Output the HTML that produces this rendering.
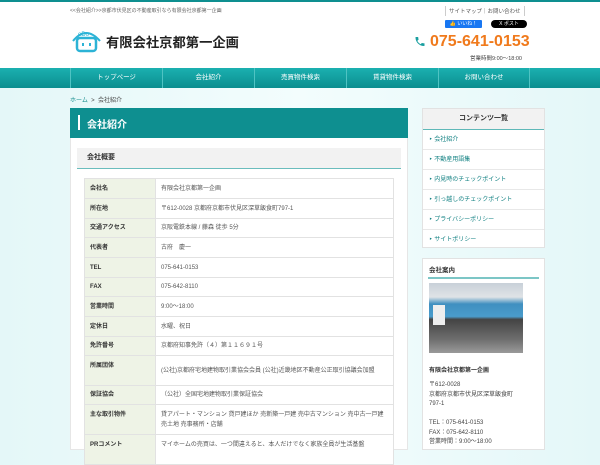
<!DOCTYPE html>
<html><head><meta charset="utf-8"><style>
*{margin:0;padding:0;box-sizing:border-box}
body{width:600px;height:450px;overflow:hidden;font-family:"Liberation Sans","Noto Sans CJK JP",sans-serif;background:linear-gradient(90deg,#e4f7f8,#f3fdfd 50%,#e4f7f8);position:relative;color:#333}
.abs{position:absolute}
#hdr{left:0;top:0;width:600px;height:68px;background:#fff;border-top:2px solid #0e8f90}
#nav{left:0;top:68px;width:600px;height:20px;background:linear-gradient(#1bb0b0,#0b8e8f)}
#nav div{position:absolute;top:0;height:20px;line-height:20px;color:#fff;font-size:6.5px;text-align:center;width:92px;border-left:1px solid #4fc3c3}
.tbl{left:84px;top:178px;width:310px;border-collapse:collapse;font-size:6px}
.tbl td{border:1px solid #e2e2e2;padding:0 5px;vertical-align:middle;line-height:10px}
.tbl td:first-child{background:#eef3e6;font-weight:bold;width:71px;color:#333}
.tbl td:last-child{background:#fff;color:#555}
.side a{display:block;height:20px;line-height:20px;border-bottom:1px solid #e8e8e8;font-size:6px;color:#0e7f80;padding-left:6px}
</style></head><body>
<div id="hdr" class="abs"></div>
<div class="abs" style="left:70px;top:7px;font-size:5px;color:#666">&lt;&lt;会社紹介&gt;&gt;京都市伏見区の不動産取引なら有限会社京都第一企画</div>
<div class="abs" style="left:445px;top:6px;font-size:5.5px;color:#555;border-left:1px solid #ccc;border-right:1px solid #ccc;padding:1px 3px">サイトマップ｜お問い合わせ</div>
<div class="abs" style="left:445px;top:20px;width:37px;height:8px;background:#1877f2;color:#fff;font-size:5px;line-height:8px;text-align:center;border-radius:1px">👍 いいね！</div>
<div class="abs" style="left:491px;top:20px;width:36px;height:8px;background:#000;color:#fff;font-size:5px;line-height:8px;text-align:center;border-radius:4px">X ポスト</div>
<svg class="abs" style="left:70px;top:27px" width="33" height="26" viewBox="0 0 33 26"><path d="M3 14 Q16 -2 30 14" fill="none" stroke="#2cb3d6" stroke-width="2"/><rect x="7" y="11" width="19" height="13" rx="3" fill="none" stroke="#2cb3d6" stroke-width="2.5"/><rect x="12" y="16" width="2" height="3" fill="#2cb3d6"/><rect x="19" y="16" width="2" height="3" fill="#2cb3d6"/><text x="8" y="9" font-size="6" fill="#2cb3d6" font-family="Liberation Sans">eDo</text></svg>
<div class="abs" style="left:106px;top:32px;font-size:13.3px;font-weight:bold;color:#222">有限会社京都第一企画</div>
<svg class="abs" style="left:414px;top:35px" width="12" height="13" viewBox="0 0 24 24"><path d="M6.6 10.8c1.4 2.8 3.8 5.1 6.6 6.6l2.2-2.2c.3-.3.7-.4 1-.2 1.1.4 2.3.6 3.6.6.6 0 1 .4 1 1V20c0 .6-.4 1-1 1C10.6 21 3 13.4 3 4c0-.6.4-1 1-1h3.5c.6 0 1 .4 1 1 0 1.3.2 2.5.6 3.6.1.3 0 .7-.2 1z" fill="#1a9fa0"/></svg>
<div class="abs" style="left:430px;top:33px;font-size:16px;font-weight:bold;color:#f07a1c">075-641-0153</div>
<div class="abs" style="left:470px;top:54px;font-size:5.5px;color:#444">営業時間9:00～18:00</div>
<div id="nav" class="abs">
<div style="left:70px">トップページ</div><div style="left:162px">会社紹介</div><div style="left:254px">売買物件検索</div><div style="left:346px">賃貸物件検索</div><div style="left:438px;width:92px;border-right:1px solid #4fc3c3">お問い合わせ</div></div>
<div class="abs" style="left:70px;top:95px;font-size:6px;color:#444"><span style="color:#1a8f90">ホーム</span> &nbsp;&gt;&nbsp; 会社紹介</div>
<div class="abs" style="left:70px;top:108px;width:338px;height:342px;background:#fff;border:1px solid #e6e6e6"></div>
<div class="abs" style="left:70px;top:108px;width:338px;height:30px;background:#0e8f90"></div>
<div class="abs" style="left:78px;top:115px;width:2px;height:15px;background:#fff"></div>
<div class="abs" style="left:87px;top:116px;font-size:10px;color:#fff;font-weight:bold">会社紹介</div>
<div class="abs" style="left:77px;top:148px;width:324px;height:21px;background:#f2f2f2;border-bottom:1.5px solid #6bbdbd;font-size:7px;font-weight:bold;line-height:20px;padding-left:10px">会社概要</div>
<table class="tbl abs">
<tr style="height:20px"><td>会社名</td><td>有限会社京都第一企画</td></tr>
<tr style="height:20px"><td>所在地</td><td>〒612-0028 京都府京都市伏見区深草飯食町797-1</td></tr>
<tr style="height:19px"><td>交通アクセス</td><td>京阪電鉄本線 / 藤森 徒歩 5分</td></tr>
<tr style="height:20px"><td>代表者</td><td>古府　慶一</td></tr>
<tr style="height:20px"><td>TEL</td><td>075-641-0153</td></tr>
<tr style="height:19px"><td>FAX</td><td>075-642-8110</td></tr>
<tr style="height:20px"><td>営業時間</td><td>9:00～18:00</td></tr>
<tr style="height:20px"><td>定休日</td><td>水曜、祝日</td></tr>
<tr style="height:19px"><td>免許番号</td><td>京都府知事免許（４）第１１６９１号</td></tr>
<tr style="height:30px"><td style="vertical-align:top;padding-top:5px">所属団体</td><td>(公社)京都府宅地建物取引業協会会員 (公社)近畿地区不動産公正取引協議会加盟</td></tr>
<tr style="height:19px"><td>保証協会</td><td>（公社）全国宅地建物取引業保証協会</td></tr>
<tr style="height:30px"><td style="vertical-align:top;padding-top:5px">主な取引物件</td><td>貸アパート・マンション 貸戸建ほか 売新築一戸建 売中古マンション 売中古一戸建 売土地 売事務所・店舗</td></tr>
<tr style="height:30px"><td style="vertical-align:top;padding-top:5px">PRコメント</td><td style="vertical-align:top;padding-top:5px">マイホームの売買は、一つ間違えると、本人だけでなく家族全員が生活基盤</td></tr>
</table>
<div class="abs side" style="left:422px;top:108px;width:123px;height:140px;background:#fff;border:1px solid #e2e2e2">
<div style="height:21px;background:#f2f2f2;border-bottom:1.5px solid #5fb8b8;text-align:center;font-size:7px;font-weight:bold;line-height:20px">コンテンツ一覧</div>
<a>‣ 会社紹介</a><a>‣ 不動産用語集</a><a>‣ 内見時のチェックポイント</a><a>‣ 引っ越しのチェックポイント</a><a>‣ プライバシーポリシー</a><a style="border:0">‣ サイトポリシー</a></div>
<div class="abs" style="left:422px;top:258px;width:123px;height:192px;background:#fff;border:1px solid #e2e2e2"></div>
<div class="abs" style="left:429px;top:264px;font-size:6.5px;font-weight:bold">会社案内</div>
<div class="abs" style="left:428px;top:277px;width:111px;height:1.5px;background:#7cc6c6"></div>
<div class="abs" style="left:429px;top:283px;width:94px;height:70px;background:linear-gradient(#c8d0d8 0,#dfe3e6 20%,#3f8fc0 30%,#4a9ccc 48%,#444 52%,#6d6d6d 80%,#9a9a9a 100%)"></div>
<div class="abs" style="left:433px;top:305px;width:12px;height:20px;background:#eee"></div>
<div class="abs" style="left:429px;top:365px;font-size:6px;font-weight:bold">有限会社京都第一企画</div>
<div class="abs" style="left:429px;top:381px;font-size:6px;line-height:9.5px;color:#444">〒612-0028<br>京都府京都市伏見区深草飯食町<br>797-1<br><br>TEL：075-641-0153<br>FAX：075-642-8110<br>営業時間：9:00～18:00</div>
</body></html>
